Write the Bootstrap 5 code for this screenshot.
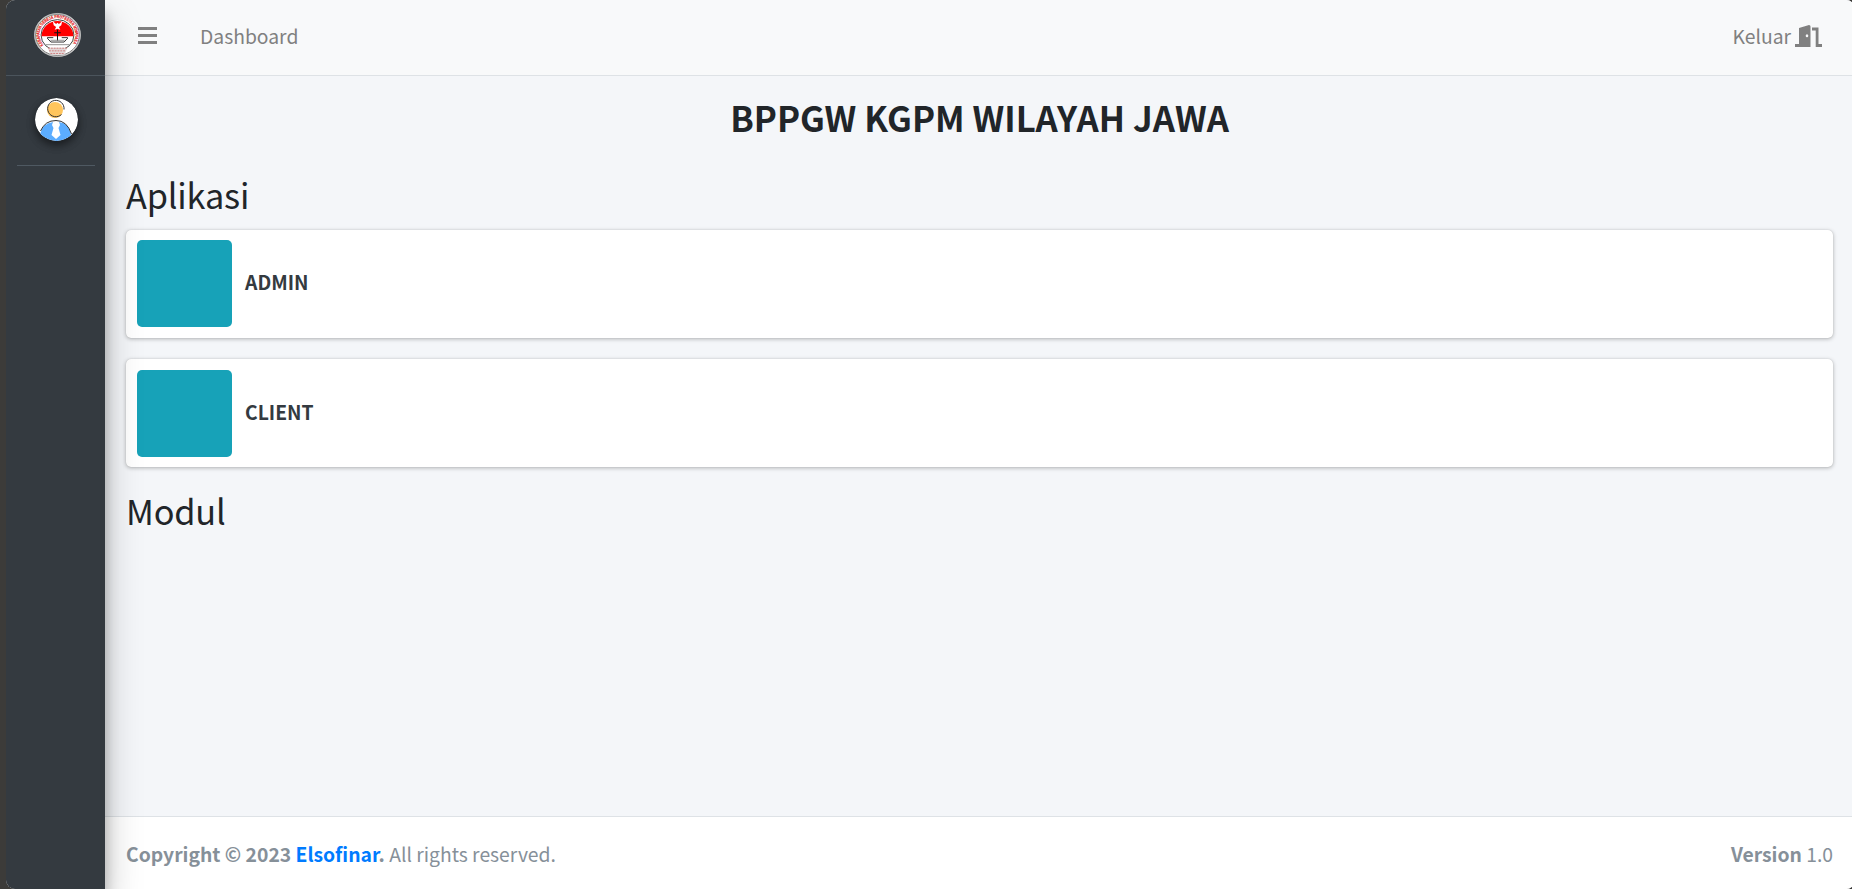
<!DOCTYPE html>
<html lang="id">
<head>
<meta charset="utf-8">
<meta name="viewport" content="width=device-width, initial-scale=1">
<title>Dashboard</title>
<link href="https://cdn.jsdelivr.net/npm/bootstrap@5.3.0/dist/css/bootstrap.min.css" rel="stylesheet">
<style>
body{background:#3c3b39;font-family:"Noto Sans CJK JP","Open Sans",sans-serif;font-size:19.32px;line-height:32px;color:#212529}
.app-window{margin-left:6px;margin-right:-3px;padding-right:3px;border-radius:9px;background:#f4f6f9}
.app-sidebar{width:99px;background:#343a40;z-index:5;box-shadow:0 19px 37px rgba(0,0,0,.25),0 13px 13px rgba(0,0,0,.22)}
.brand-box{height:76px;border-bottom:1px solid #4b545c;padding:13px 0 0 28px}
.user-box{height:90px;margin:0 10px 0 11px;border-bottom:1px solid #4f5962;padding:22px 0 0 18px}
.avatar{width:43px;height:43px;border-radius:50%;box-shadow:0 4px 8px rgba(0,0,0,.3),0 4px 8px rgba(0,0,0,.3)}
.app-topbar{height:76px;background:#f8f9fa;border-bottom:1px solid #dee2e6;padding:0 30px 4px 33px;color:#808080}
.app-topbar a{color:#808080}
.menu-icon{margin-right:43px}
.app-content{padding:20px 19px 0 21px}
.page-title{font-size:34.7px;line-height:42px;margin-bottom:33px}
.section-title{font-size:34.3px;line-height:46px;font-weight:400;letter-spacing:-.18px;margin-bottom:12.5px}
.app-tile{height:108px;padding:10.7px 11px;margin-bottom:21.8px;border:0;border-radius:5px;box-shadow:0 0 1px rgba(0,0,0,.18),0 1px 4px rgba(0,0,0,.28)}
.app-tile + .app-tile{margin-bottom:20px}
.tile-icon{width:95px;height:86.6px;border-radius:5px;background:#17a2b8}
.tile-label{margin-left:13px;padding-bottom:3px;color:#343a40}
.app-footer{height:73px;background:#fff;border-top:1px solid #dee2e6;padding:2px 19px 0 21px;color:#869099}
.app-footer a{color:#007bff}
</style>
</head>
<body class="overflow-hidden">
<div class="app-window d-flex vh-100 overflow-hidden">
  <aside class="app-sidebar flex-shrink-0 position-relative">
    <div class="brand-box">
      <svg class="d-block overflow-visible" width="47" height="44" viewBox="0 0 100 100" preserveAspectRatio="none">
        <defs><path id="ring" d="M20 73A38 38 0 1 1 80 73"/></defs>
        <circle cx="50" cy="50" r="49" fill="#eee" stroke="#bbb" stroke-width="2"/>
        <circle cx="50" cy="50" r="46.500" fill="#fff" stroke="#444" stroke-width="1.5"/>
        <text font-family="Liberation Sans,sans-serif" font-weight="700" font-size="9.500" fill="#e32020" stroke="#e32020" stroke-width=".4"><textPath href="#ring" textLength="164" lengthAdjust="spacingAndGlyphs">KERAPATAN GEREJA PROTESTAN MINAHASA</textPath></text>
        <circle cx="50" cy="50" r="35" fill="#fff" stroke="#333" stroke-width="2"/>
        <path d="M16 53A34 35 0 0 1 84 53Z" fill="#f00"/>
        <path d="M40 19l7 6 3-3 3 3 7-6-2 9-5 4 3 6-6-2-6 2 3-6-5-4z" fill="#fff"/>
        <path d="M50 38v25M43 45h14" stroke="#111" stroke-width="2.2"/>
        <path d="M28 56h13M59 56h13M28 57l8 9h28l8-9" fill="none" stroke="#222" stroke-width="2"/>
        <path d="M35 62h30M25 72h50" stroke="#888" stroke-width="2"/>
        <path d="M29 79h42l-6 16H35z" fill="#e2d8d8"/>
        <path d="M30 80h40M32 86h36M35 92h30" stroke="#c77" stroke-width="2" stroke-dasharray="4 2"/>
      </svg>
    </div>
    <div class="user-box">
      <svg class="avatar d-block" viewBox="0 0 43 43">
        <defs><clipPath id="face"><circle cx="21.5" cy="21.5" r="21.5"/></clipPath></defs>
        <g clip-path="url(#face)">
          <path fill="#fff" d="M0 0h43v43H0z"/>
          <circle cx="20" cy="12" r="8" fill="#ffc55c"/>
          <path d="M29 11.500A8.200 8.200 0 1 0 26.500 16.500" fill="none" stroke="#333" stroke-width="1"/>
          <path d="M5 36Q8 25 18 24h6q10 1 12 13v6H5z" fill="#5cadff"/>
          <path d="M5.500 33Q10 22.500 21 22.500T36.500 36" fill="none" stroke="#333" stroke-width="1"/>
          <path d="M18 24h6l1 3-1.500 3 2 7-4.500 4-4.500-4 2-7-1.500-3z" fill="#fff"/>
        </g>
      </svg>
    </div>
  </aside>
  <div class="d-flex flex-column flex-grow-1">
    <nav class="app-topbar d-flex align-items-center">
      <svg class="menu-icon" width="19" height="18" viewBox="0 0 19 18"><path d="M0 1.500h19M0 8.500h19M0 15.500h19" stroke="#808080" stroke-width="3"/></svg>
      <a href="#" class="text-decoration-none">Dashboard</a>
      <a href="#" class="text-decoration-none ms-auto d-flex align-items-center">Keluar
        <svg class="ms-1" width="27" height="22" viewBox="0 0 27 22" fill="#808080"><path fill-rule="evenodd" d="M0 19h4V3L14 0q1.500 0 1.500 1.500V22H0zM12 9.200a1.300 1.500 0 1 0 0 3 1.300 1.500 0 1 0 0-3z"/><path d="M17 2.500h6.500V19H27v3h-6.300V5.500H17z"/></svg>
      </a>
    </nav>
    <main class="app-content flex-grow-1">
      <h1 class="page-title fw-bold text-center">BPPGW KGPM WILAYAH JAWA</h1>
      <h2 class="section-title">Aplikasi</h2>
      <div class="card app-tile flex-row align-items-start"><div class="tile-icon"></div><strong class="tile-label align-self-center">ADMIN</strong></div>
      <div class="card app-tile flex-row align-items-start"><div class="tile-icon"></div><strong class="tile-label align-self-center">CLIENT</strong></div>
      <h2 class="section-title">Modul</h2>
    </main>
    <footer class="app-footer d-flex align-items-center justify-content-between">
      <div><strong>Copyright © 2023 <a href="#" class="text-decoration-none">Elsofinar</a>.</strong> All rights reserved.</div>
      <div><b>Version</b> 1.0</div>
    </footer>
  </div>
</div>
<script src="https://cdn.jsdelivr.net/npm/bootstrap@5.3.0/dist/js/bootstrap.bundle.min.js"></script>
</body>
</html>
